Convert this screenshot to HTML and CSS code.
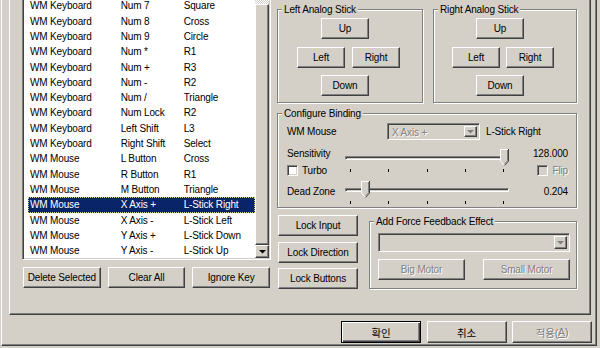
FILE: index.html
```html
<!DOCTYPE html>
<html>
<head>
<meta charset="utf-8">
<link rel="stylesheet" href="styles.css">
</head>
<body>
<div class="frame">
  <div class="tabpage">
    <div class="left-col">
      <div class="listview">
        <div class="rows">
          <div class="row first"><span>WM Keyboard</span><span>Num 7</span><span>Square</span></div>
          <div class="row"><span>WM Keyboard</span><span>Num 8</span><span>Cross</span></div>
          <div class="row"><span>WM Keyboard</span><span>Num 9</span><span>Circle</span></div>
          <div class="row"><span>WM Keyboard</span><span>Num *</span><span>R1</span></div>
          <div class="row"><span>WM Keyboard</span><span>Num +</span><span>R3</span></div>
          <div class="row"><span>WM Keyboard</span><span>Num -</span><span>R2</span></div>
          <div class="row"><span>WM Keyboard</span><span>Num /</span><span>Triangle</span></div>
          <div class="row"><span>WM Keyboard</span><span>Num Lock</span><span>R2</span></div>
          <div class="row"><span>WM Keyboard</span><span>Left Shift</span><span>L3</span></div>
          <div class="row"><span>WM Keyboard</span><span>Right Shift</span><span>Select</span></div>
          <div class="row"><span>WM Mouse</span><span>L Button</span><span>Cross</span></div>
          <div class="row"><span>WM Mouse</span><span>R Button</span><span>R1</span></div>
          <div class="row"><span>WM Mouse</span><span>M Button</span><span>Triangle</span></div>
          <div class="row sel"><span>WM Mouse</span><span>X Axis +</span><span>L-Stick Right</span></div>
          <div class="row"><span>WM Mouse</span><span>X Axis -</span><span>L-Stick Left</span></div>
          <div class="row"><span>WM Mouse</span><span>Y Axis +</span><span>L-Stick Down</span></div>
          <div class="row"><span>WM Mouse</span><span>Y Axis -</span><span>L-Stick Up</span></div>
        </div>
        <div class="vscroll">
          <div class="track"></div>
          <div class="thumb raised"></div>
          <div class="arrow raised"><svg width="7" height="4" viewBox="0 0 7 4"><polygon points="0,0 7,0 3.5,3.5" fill="#000"/></svg></div>
        </div>
      </div>
      <div class="list-buttons">
        <button class="btn">Delete Selected</button>
        <button class="btn">Clear All</button>
        <button class="btn">Ignore Key</button>
      </div>
    </div>

    <div class="right-col">
      <div class="sticks">
        <fieldset class="group stick stick-left">
          <legend>Left Analog Stick</legend>
          <div class="stick-pad">
            <button class="btn btn-dir btn-ud">Up</button>
            <div class="stick-mid"><button class="btn btn-dir">Left</button><button class="btn btn-dir">Right</button></div>
            <button class="btn btn-dir btn-ud">Down</button>
          </div>
        </fieldset>
        <fieldset class="group stick stick-right">
          <legend>Right Analog Stick</legend>
          <div class="stick-pad">
            <button class="btn btn-dir btn-ud">Up</button>
            <div class="stick-mid"><button class="btn btn-dir">Left</button><button class="btn btn-dir">Right</button></div>
            <button class="btn btn-dir btn-ud">Down</button>
          </div>
        </fieldset>
      </div>

      <fieldset class="group binding">
        <legend>Configure Binding</legend>
        <div class="binding-body">
          <div class="bind-row">
            <span class="bind-device">WM Mouse</span>
            <div class="combo combo-small">
              <span class="combo-text dis">X Axis +</span>
              <span class="combo-arrow raised"><svg width="7" height="4" viewBox="0 0 7 4"><polygon points="0,0 7,0 3.5,3.5" fill="#808080"/></svg></span>
            </div>
            <span class="bind-target">L-Stick Right</span>
          </div>
          <div class="bind-grid">
            <span class="lbl-sens">Sensitivity</span>
            <div class="slider slider-sens" style="--v:1">
              <div class="slider-track"></div>
              <svg class="slider-thumb" width="9" height="17" viewBox="0 0 9 17"><polygon points="0,0 9,0 9,12 4.5,16.5 0,12" fill="#d4d0c8"/><polyline points="0.5,12 0.5,0.5 8,0.5" fill="none" stroke="#fff"/><polyline points="0.5,12.2 4.3,16" fill="none" stroke="#fff"/><polyline points="8.5,0 8.5,12.2 4.5,16.4" fill="none" stroke="#404040"/><polyline points="7.5,1 7.5,11.8 4.5,14.8" fill="none" stroke="#808080"/></svg>
              <div class="ticks"><i></i><i></i><i></i><i></i><i></i></div>
            </div>
            <span class="val-sens">128.000</span>
            <label class="chk chk-turbo"><span class="box"></span>Turbo</label>
            <label class="chk chk-flip dis"><span class="box box-dis"></span>Flip</label>
            <span class="lbl-dz">Dead Zone</span>
            <div class="slider slider-dz" style="--v:0.103">
              <div class="slider-track"></div>
              <svg class="slider-thumb" width="9" height="17" viewBox="0 0 9 17"><polygon points="0,0 9,0 9,12 4.5,16.5 0,12" fill="#d4d0c8"/><polyline points="0.5,12 0.5,0.5 8,0.5" fill="none" stroke="#fff"/><polyline points="0.5,12.2 4.3,16" fill="none" stroke="#fff"/><polyline points="8.5,0 8.5,12.2 4.5,16.4" fill="none" stroke="#404040"/><polyline points="7.5,1 7.5,11.8 4.5,14.8" fill="none" stroke="#808080"/></svg>
              <div class="ticks"><i></i><i></i><i></i><i></i><i></i></div>
            </div>
            <span class="val-dz">0.204</span>
          </div>
        </div>
      </fieldset>

      <div class="bottom-row">
        <div class="lock-col">
          <button class="btn">Lock Input</button>
          <button class="btn">Lock Direction</button>
          <button class="btn">Lock Buttons</button>
        </div>
        <fieldset class="group ffb">
          <legend>Add Force Feedback Effect</legend>
          <div class="ffb-body">
            <div class="combo combo-wide">
              <span class="combo-text"></span>
              <span class="combo-arrow raised"><svg width="7" height="4" viewBox="0 0 7 4"><polygon points="0,0 7,0 3.5,3.5" fill="#808080"/></svg></span>
            </div>
            <div class="motor-row">
              <button class="btn btn-motor dis">Big Motor</button>
              <button class="btn btn-motor dis">Small Motor</button>
            </div>
          </div>
        </fieldset>
      </div>
    </div>
  </div>

  <div class="footer">
    <button class="btn btn-foot btn-default">확인</button>
    <button class="btn btn-foot">취소</button>
    <button class="btn btn-foot dis">적용(<u>A</u>)</button>
  </div>
</div>
</body>
</html>
```

FILE: styles.css
```css
* { box-sizing: border-box; }
html, body { margin: 0; padding: 0; }
body {
  width: 600px;
  height: 348px;
  overflow: hidden;
  background: #d4d0c8;
  font-family: "Liberation Sans", Arial, sans-serif;
  font-size: 10px;
  letter-spacing: -0.15px;
  color: #000;
}

.frame {
  margin-left: 1px;
  width: 596px;
  height: 346px;
  border-left: 1px solid #fff;
  border-right: 1px solid #404040;
  border-bottom: 1px solid #404040;
  box-shadow: inset -1px -1px #808080;
}

.tabpage {
  margin-left: 7px;
  width: 582px;
  height: 315px;
  display: flex;
  border-left: 1px solid #fff;
  border-right: 1px solid #404040;
  border-bottom: 1px solid #404040;
  box-shadow: inset -1px -1px #808080;
}

/* raised 3D element */
.raised {
  background: #d4d0c8;
  border: 1px solid;
  border-color: #fff #404040 #404040 #fff;
  box-shadow: inset -1px -1px #808080;
}

.btn {
  font: inherit;
  letter-spacing: inherit;
  color: #000;
  background: #d4d0c8;
  border: 1px solid;
  border-color: #fff #404040 #404040 #fff;
  box-shadow: inset -1px -1px #808080;
  padding: 0;
  margin: 0;
  height: 21px;
  display: flex;
  align-items: center;
  justify-content: center;
  white-space: nowrap;
}

.dis { color: #808080; text-shadow: 1px 1px #fff; }

/* ---------- left column ---------- */
.left-col {
  margin-left: 12px;
  width: 249px;
  display: flex;
  flex-direction: column;
}

.listview {
  height: 260px;
  display: flex;
  background: #fff;
  border-left: 1px solid #808080;
  border-right: 1px solid #fff;
  border-bottom: 1px solid #fff;
  box-shadow: inset 1px 0 #404040, inset -1px -1px #d4d0c8;
  padding: 0 1px 1px 1px;
}

.rows {
  flex: 1;
  overflow: hidden;
}

.row {
  display: grid;
  grid-template-columns: 90.7px 63px 1fr;
  height: 15.31px;
  line-height: 15.31px;
  margin-left: 4px;
  padding-left: 2px;
  white-space: nowrap;
}
.row.first { margin-top: -1.6px; }
.row.sel {
  background: #0a246a;
  color: #fff;
  outline: 1px dotted #d8cc90;
  outline-offset: -1px;
}

.vscroll {
  width: 14px;
  display: flex;
  flex-direction: column;
}
.track {
  height: 4px;
  background: repeating-conic-gradient(#fff 0 25%, #d4d0c8 0 50%) 0 0 / 2px 2px;
}
.thumb { flex: 1; }
.arrow {
  height: 13px;
  display: flex;
  align-items: center;
  justify-content: center;
}
.arrow svg { display: block; margin-top: 1px; }

.list-buttons {
  display: flex;
  gap: 7px;
  margin-top: 7px;
  padding-left: 1px;
  width: 248px;
}
.list-buttons .btn { flex: 1; }

/* ---------- right column ---------- */
.right-col {
  margin-left: 6px;
  width: 300px;
  padding-top: 3px;
  display: flex;
  flex-direction: column;
}

.group {
  margin: 0;
  padding: 0;
  min-width: 0;
  border: 1px solid #808080;
  box-shadow: inset 1px 1px #fff, 1px 1px #fff;
}
.group legend {
  margin-left: 4px;
  padding: 0 2px;
  line-height: 13px;
  height: 13px;
  background: #d4d0c8;
}

.sticks {
  display: flex;
  gap: 10px;
  height: 100px;
}
.stick { height: 100px; }
.stick-left { width: 146px; }
.stick-right { width: 144px; }
.stick-pad { padding: 2px 0 0 19px; }
.stick-right .stick-pad { padding-left: 18px; }
.btn-dir { width: 48px; }
.btn-ud { margin-left: 24px; }
.stick-mid { display: flex; gap: 7px; margin: 8px 0 7px; }
.stick-right .stick-mid { gap: 6px; }

.group.binding {
  margin-top: 4px;
  height: 101px;
}
.binding-body { padding: 3px 8px 0 9px; }
.bind-row {
  display: flex;
  align-items: center;
  height: 17px;
}
.bind-device { width: 100px; }
.bind-target { margin-left: 6px; }

.combo {
  display: flex;
  align-items: stretch;
  padding: 2px;
  background: #d4d0c8;
  border: 1px solid;
  border-color: #808080 #fff #fff #808080;
  box-shadow: inset 1px 1px #404040, inset -1px -1px #d4d0c8;
}
.combo-small { width: 93px; height: 17px; }
.combo-wide { width: 100%; height: 19px; }
.combo-text {
  flex: 1;
  padding-left: 2px;
  line-height: 13px;
}
.combo-arrow {
  width: 13px;
  display: flex;
  align-items: center;
  justify-content: center;
}

.bind-grid {
  margin-top: 5px;
  display: grid;
  grid-template-columns: 58px 164px 1fr;
  grid-template-rows: 17px 16px 27px;
}
.lbl-sens { grid-area: 1 / 1; align-self: center; }
.slider-sens { grid-column: 2; grid-row: 1 / 3; margin-top: 4px; }
.val-sens { grid-area: 1 / 3; justify-self: end; align-self: center; }
.chk-turbo { grid-area: 2 / 1; }
.chk-flip { grid-area: 2 / 3; justify-self: end; }
.lbl-dz { grid-area: 3 / 1; align-self: center; }
.slider-dz { grid-area: 3 / 2; margin-top: 3px; }
.val-dz { grid-area: 3 / 3; justify-self: end; align-self: center; }

.slider {
  position: relative;
  height: 24px;
}
.slider-track {
  margin-top: 7px;
  height: 4px;
  background: #d4d0c8;
  border: 1px solid;
  border-color: #808080 #fff #fff #808080;
  box-shadow: inset 1px 1px #404040;
}
.slider-thumb {
  position: absolute;
  top: 0;
  left: calc(var(--v) * (100% - 9px));
  display: block;
}
.ticks {
  display: flex;
  justify-content: space-between;
  padding: 0 5px;
  margin-top: 9px;
}
.ticks i {
  display: block;
  width: 1px;
  height: 3px;
  background: #000;
}

.chk {
  display: flex;
  align-items: center;
  gap: 4px;
  align-self: center;
}
.box {
  width: 11px;
  height: 11px;
  background: #fff;
  border: 1px solid;
  border-color: #808080 #fff #fff #808080;
  box-shadow: inset 1px 1px #404040, inset -1px -1px #d4d0c8;
}
.box-dis { background: #d4d0c8; }

.bottom-row {
  display: flex;
  margin-top: 7px;
  height: 74px;
}
.lock-col {
  margin-left: 1px;
  width: 80px;
  display: flex;
  flex-direction: column;
  justify-content: space-between;
}
.group.ffb {
  margin-left: 11px;
  flex: 1;
  height: 74px;
}
.ffb-body { padding: 5px 6px 0 8px; }
.motor-row {
  display: flex;
  justify-content: space-between;
  margin-top: 7px;
}
.btn-motor { width: 87px; }

/* ---------- footer ---------- */
.footer {
  display: flex;
  justify-content: flex-end;
  gap: 5.5px;
  padding-right: 4px;
  margin-top: 6px;
}
.btn-foot {
  width: 80px;
  height: 22px;
  font-family: "Liberation Sans", "Noto Sans CJK KR", sans-serif;
  font-size: 10.5px;
}
.btn-default {
  border-color: #000;
  box-shadow: inset 1px 1px #fff, inset -1px -1px #404040, inset -2px -2px #808080;
}
```
